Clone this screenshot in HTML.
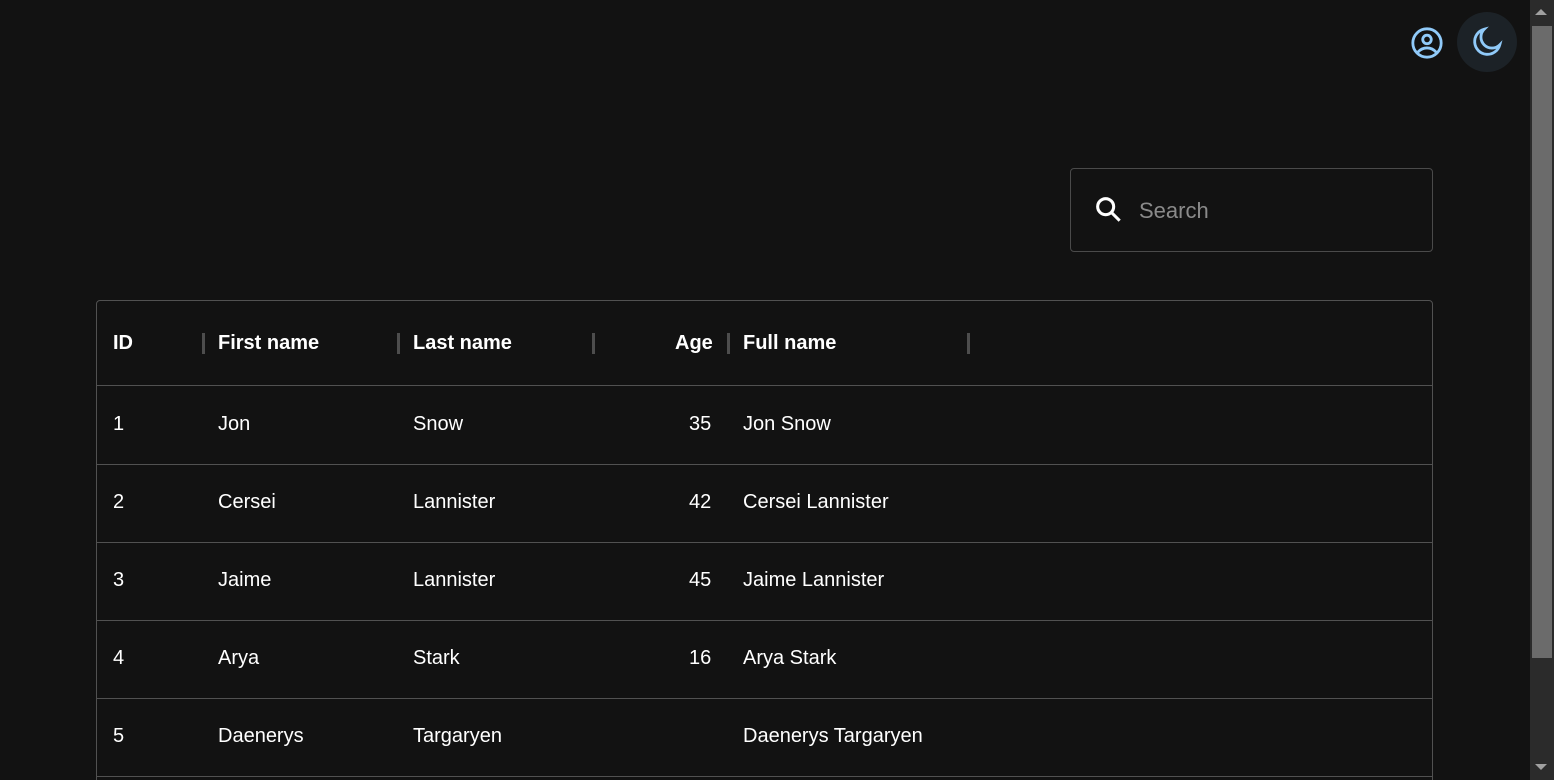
<!DOCTYPE html>
<html style="height:780px;overflow:hidden"><head><style>
body{margin:0;background:#121212;width:1554px;height:780px;overflow:hidden;font-family:"Liberation Sans",sans-serif;color:#fff;position:relative}
.sb{position:absolute;left:1530px;top:0;width:24px;height:780px;background:#2b2b2b}
.thumb{position:absolute;left:1532px;top:26px;width:20px;height:632px;background:#6b6b6b}
.arr{position:absolute;left:1535px;width:0;height:0;border-left:6px solid transparent;border-right:6px solid transparent}
.search{position:absolute;left:1070px;top:168px;width:363px;height:84px;border:1px solid #4a4a4a;border-radius:4px;box-sizing:border-box}
.search span{position:absolute;left:68px;top:29px;font-size:22px;color:#8a8a8a}
.grid{position:absolute;left:96px;top:300px;width:1337px;height:490px;border:1px solid #515151;border-radius:4px;box-sizing:border-box}
.row{position:absolute;left:0;width:1335px;height:78px;border-bottom:1px solid #515151;font-size:20px}
.row div{position:absolute;top:27px}
.hd{font-weight:bold}
.sep{position:absolute;top:32px;width:3px;height:21px;background:#4d4d4d}
.hd .sep{top:32px}
</style></head><body>
<svg style="position:absolute;left:1410px;top:26px" width="34" height="34" viewBox="0 0 24 24" fill="none" stroke="#90caf9" stroke-width="2"><circle cx="12" cy="12" r="10"/><circle cx="12" cy="9.5" r="3"/><path d="M5.5 18.5c1.8-2 4-3 6.5-3s4.7 1 6.5 3"/></svg>
<div style="position:absolute;left:1457px;top:12px;width:60px;height:60px;border-radius:50%;background:#1c2227"></div>
<svg style="position:absolute;left:1470px;top:25px" width="34" height="34" viewBox="0 0 24 24" fill="none" stroke="#90caf9" stroke-width="2"><path d="M10 3a9 9 0 1 0 11 11a7.5 7.5 0 0 1-11-11z"/></svg>
<div class="sb"></div><div class="thumb"></div>
<div class="arr" style="top:9px;border-bottom:6px solid #a0a0a0"></div>
<div class="arr" style="top:764px;border-top:6px solid #a0a0a0"></div>
<div class="search"><svg style="position:absolute;left:22px;top:25px" width="32" height="32" viewBox="0 0 24 24" fill="none" stroke="#fff" stroke-width="2.3"><circle cx="9.5" cy="9.5" r="6"/><path d="M14 14l6 6"/></svg><span>Search</span></div>
<div class="grid">
<div class="row hd" style="top:0;height:84px"><div style="left:16px;top:31px">ID</div><div class="sep" style="left:105px"></div><div style="left:121px;top:31px">First name</div><div class="sep" style="left:300px"></div><div style="left:316px;top:31px">Last name</div><div class="sep" style="left:495px"></div><div style="left:578px;top:31px">Age</div><div class="sep" style="left:630px"></div><div style="left:646px;top:31px">Full name</div><div class="sep" style="left:870px"></div></div>
<div class="row" style="top:85px"><div style="left:16px">1</div><div style="left:121px">Jon</div><div style="left:316px">Snow</div><div style="left:592px">35</div><div style="left:646px">Jon Snow</div></div>
<div class="row" style="top:163px"><div style="left:16px">2</div><div style="left:121px">Cersei</div><div style="left:316px">Lannister</div><div style="left:592px">42</div><div style="left:646px">Cersei Lannister</div></div>
<div class="row" style="top:241px"><div style="left:16px">3</div><div style="left:121px">Jaime</div><div style="left:316px">Lannister</div><div style="left:592px">45</div><div style="left:646px">Jaime Lannister</div></div>
<div class="row" style="top:319px"><div style="left:16px">4</div><div style="left:121px">Arya</div><div style="left:316px">Stark</div><div style="left:592px">16</div><div style="left:646px">Arya Stark</div></div>
<div class="row" style="top:397px"><div style="left:16px">5</div><div style="left:121px">Daenerys</div><div style="left:316px">Targaryen</div><div style="left:646px">Daenerys Targaryen</div></div>
</div>
</body></html>
